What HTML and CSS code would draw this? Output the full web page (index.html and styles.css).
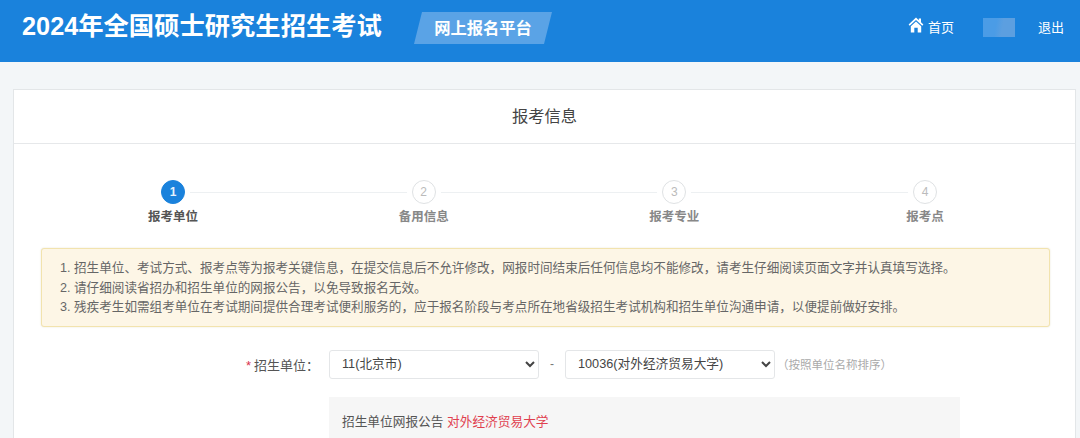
FILE: index.html
```html
<!DOCTYPE html>
<html lang="zh-CN">
<head>
<meta charset="utf-8">
<title>网上报名平台</title>
<link rel="stylesheet" href="styles.css">
</head>
<body>
<header class="topbar">
  <div class="brand">2024年全国硕士研究生招生考试</div>
  <div class="platform"><span>网上报名平台</span></div>
  <nav class="nav">
    <a class="nav-home">
      <svg class="home-icon" viewBox="0 0 16 16" width="16" height="16"><path fill="#fff" d="M8 .5 .6 7.600l1.100 1.100L8 3l6.300 5.700 1.100-1.100L13 5.300V1.500h-2.200v1.700z"/><path fill="#fff" d="M8 4.500 2.800 9.200v6.300h3.500V10.800h3.400v4.700h3.500V9.200z"/></svg>
      <span>首页</span>
    </a>
    <div class="user-blur"></div>
    <a class="nav-exit">退出</a>
  </nav>
</header>
<main class="card">
  <h1 class="card-title">报考信息</h1>
  <ol class="steps">
    <li class="step active"><span class="dot">1</span><span class="label">报考单位</span></li>
    <li class="step"><span class="dot">2</span><span class="label">备用信息</span></li>
    <li class="step"><span class="dot">3</span><span class="label">报考专业</span></li>
    <li class="step"><span class="dot">4</span><span class="label">报考点</span></li>
  </ol>
  <div class="alert">
    <p>1. 招生单位、考试方式、报考点等为报考关键信息，在提交信息后不允许修改，网报时间结束后任何信息均不能修改，请考生仔细阅读页面文字并认真填写选择。</p>
    <p>2. 请仔细阅读省招办和招生单位的网报公告，以免导致报名无效。</p>
    <p>3. 残疾考生如需组考单位在考试期间提供合理考试便利服务的，应于报名阶段与考点所在地省级招生考试机构和招生单位沟通申请，以便提前做好安排。</p>
  </div>
  <div class="form-row">
    <label class="form-label"><span class="req">*</span>招生单位：</label>
    <select class="sel"><option>11(北京市)</option></select>
    <span class="dash">-</span>
    <select class="sel"><option>10036(对外经济贸易大学)</option></select>
    <span class="hint">（按照单位名称排序）</span>
  </div>
  <div class="notice">招生单位网报公告 <a class="notice-link">对外经济贸易大学</a></div>
</main>
</body>
</html>
```
FILE: styles.css
```css
* { box-sizing: border-box; }
html, body { margin: 0; height: 438px; overflow: hidden; }
body {
  background: #f3f6f8;
  color: #555;
  font-family: "Liberation Sans", "Noto Sans CJK SC", sans-serif;
  font-size: 12px;
}
.topbar {
  height: 62px;
  background: #1a82dc;
  color: #fff;
  display: flex;
  align-items: flex-start;
  padding-left: 22px;
}
.brand {
  font-size: 25.300px;
  font-weight: 700;
  line-height: 30px;
  margin-top: 11px;
  width: 360px;
  white-space: nowrap;
}
.platform {
  margin: 12px 0 0 32px;
  width: 138px;
  height: 32px;
  background: #5aa3e6;
  clip-path: polygon(8px 0, 100% 0, 130px 100%, 0 100%);
  display: flex;
  align-items: center;
  justify-content: center;
  font-size: 16.300px;
  font-weight: 700;
  padding-bottom: 2px;
}
.nav {
  margin-left: auto;
  display: flex;
  align-items: center;
  height: 52px;
  font-size: 13px;
  padding-right: 16px;
}
.nav-home { display: flex; align-items: center; gap: 4px; }
.home-icon { margin-bottom: 2px; }
.user-blur {
  width: 32px;
  height: 19px;
  margin: 2px 23px 0 29px;
  background: linear-gradient(100deg, #4b9ce6 40%, #5c9fe0 60%);
}
.card {
  margin: 27px 4px 0 13px;
  height: 360px;
  background: #fff;
  border: 1px solid #e3e6e8;
  border-bottom: 0;
}
.card-title {
  margin: 0;
  height: 54px;
  border-bottom: 1px solid #e6e8ea;
  font-size: 16.300px;
  font-weight: 400;
  line-height: 53px;
  text-align: center;
  color: #444;
}
.steps {
  list-style: none;
  margin: 0;
  padding: 36px 115px 0 124px;
  height: 104px;
  display: flex;
  justify-content: space-between;
  position: relative;
}
.steps::before {
  content: "";
  position: absolute;
  left: 170px;
  right: 160px;
  top: 48px;
  height: 1px;
  background: #edf0f2;
}
.step {
  width: 70px;
  display: flex;
  flex-direction: column;
  align-items: center;
  gap: 5px;
  position: relative;
  color: #888;
  font-size: 12.500px;
  font-weight: 700;
}
.dot {
  width: 24px;
  height: 24px;
  border-radius: 50%;
  border: 1px solid #dfe2e4;
  background: #fff;
  box-shadow: 0 0 0 5px #fff;
  color: #bbb;
  font-size: 12px;
  font-weight: 400;
  line-height: 22px;
  text-align: center;
}
.label { line-height: 16px; }
.step.active { color: #555; }
.step.active .dot {
  background: #1a82dc;
  border-color: #1a82dc;
  color: #e6f2fc;
  font-weight: 700;
}
.alert {
  margin: 0 25px 0 27px;
  height: 79px;
  padding: 10px 18px;
  background: #fdf6e6;
  border: 1px solid #f2e3ae;
  border-radius: 3px;
  box-shadow: 0 0 2px #e8e4d4;
  color: #666;
  font-size: 12.600px;
  line-height: 19.500px;
}
.alert p { margin: 0; white-space: nowrap; }
.form-row {
  display: flex;
  align-items: center;
  height: 30px;
  margin-top: 22px;
  padding-left: 232px;
}
.form-label {
  width: 83px;
  font-size: 13px;
  color: #555;
  white-space: nowrap;
}
.req { color: #d9324f; margin-right: 3px; }
.sel {
  width: 210px;
  height: 29px;
  background: #fff;
  border: 1px solid #e4e6e8;
  border-radius: 3px;
  padding-left: 8px;
  color: #444;
  font-family: inherit;
  font-size: 12.700px;
}
.dash { width: 26px; text-align: center; color: #777; }
.hint { margin-left: 2px; font-size: 11.500px; color: #aaa; white-space: nowrap; }
.notice {
  margin: 18px 0 0 315px;
  width: 631px;
  height: 60px;
  padding: 17px 13px;
  background: #f6f6f6;
  font-size: 12.700px;
  line-height: 17px;
  color: #555;
}
.notice-link { color: #e0404f; }
```
